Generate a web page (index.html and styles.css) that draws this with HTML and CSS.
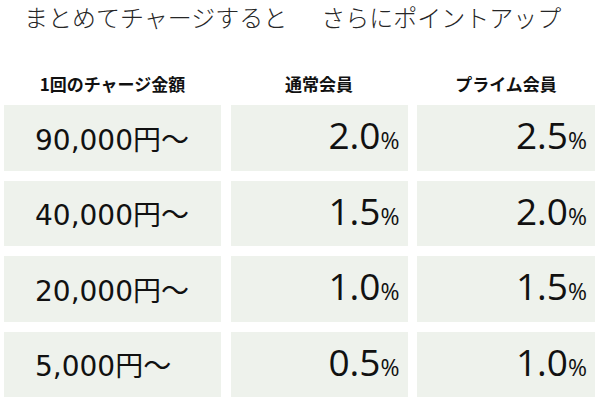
FILE: index.html
```html
<!DOCTYPE html>
<html lang="ja">
<head>
<meta charset="utf-8">
<link rel="stylesheet" href="styles.css">
</head>
<body>
<div class="page">
  <h1 class="title"><span>まとめてチャージすると</span><span class="title-rest">さらにポイントアップ</span></h1>
  <div class="table">
    <div class="head">1回のチャージ金額</div>
    <div class="head">通常会員</div>
    <div class="head">プライム会員</div>

    <div class="cell amount">90,000円～</div>
    <div class="cell rate">2.0<span class="pct">%</span></div>
    <div class="cell rate">2.5<span class="pct">%</span></div>

    <div class="cell amount">40,000円～</div>
    <div class="cell rate">1.5<span class="pct">%</span></div>
    <div class="cell rate">2.0<span class="pct">%</span></div>

    <div class="cell amount">20,000円～</div>
    <div class="cell rate">1.0<span class="pct">%</span></div>
    <div class="cell rate">1.5<span class="pct">%</span></div>

    <div class="cell amount">5,000円～</div>
    <div class="cell rate">0.5<span class="pct">%</span></div>
    <div class="cell rate">1.0<span class="pct">%</span></div>
  </div>
</div>
</body>
</html>
```
FILE: styles.css
```css
html, body {
  margin: 0;
  padding: 0;
  background: #ffffff;
}
.page {
  width: 600px;
  height: 401px;
  box-sizing: border-box;
  padding: 0 5px 0 4px;
  overflow: hidden;
  font-family: "Noto Sans CJK JP", sans-serif;
  color: #111;
}
.title {
  margin: 0;
  padding-left: 20px;
  height: 33px;
  line-height: 33px;
  font-size: 24px;
  font-weight: 300;
  color: #262626;
  display: flex;
  white-space: nowrap;
}
.title-rest {
  margin-left: 34px;
}
.table {
  margin-top: 32px;
  display: grid;
  grid-template-columns: 217px 177px 178px;
  grid-template-rows: 30px repeat(4, 65.5px);
  column-gap: 9.5px;
  row-gap: 10px;
}
.head {
  text-align: center;
  font-size: 17px;
  font-weight: 700;
  line-height: 30px;
  color: #111;
  transform: translateY(4px);
}
.cell {
  background: #eef2ec;
  display: flex;
  align-items: center;
  color: #111;
}
.amount {
  padding-left: 31px;
  font-family: "DejaVu Sans", "Noto Sans CJK JP", sans-serif;
  font-size: 28px;
}
.rate {
  justify-content: flex-end;
  align-items: baseline;
  padding-right: 8px;
  padding-top: 10px;
  box-sizing: border-box;
  font-family: "Open Sans", sans-serif;
  font-size: 37px;
  line-height: 40px;
}
.pct {
  font-size: 23px;
  margin-left: 0;
}
```
